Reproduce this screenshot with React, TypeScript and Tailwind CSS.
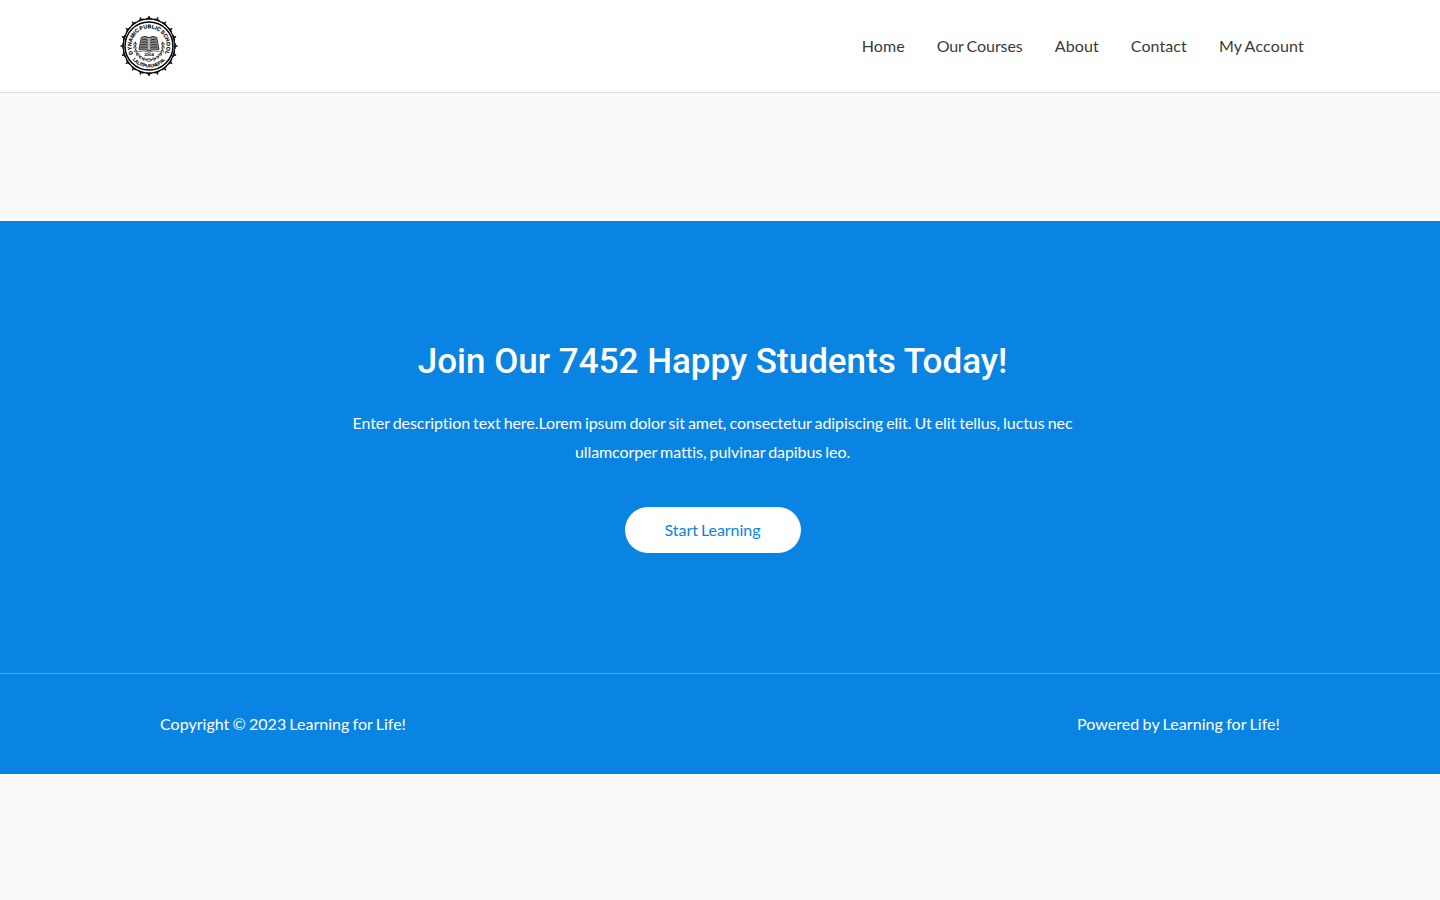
const petals = Array.from({ length: 20 }, (_, i) => i * 18);

function Logo() {
  return (
    <svg className="block h-[60px] w-[60px]" viewBox="-30 -30 60 60" role="img" aria-label="Dynamic Public School">
      <g transform="scale(0.95 1)">
        {petals.map((a) => (
          <path
            key={a}
            d="M-4.3 -26.6 Q-2.6 -28 -0.6 -27.9 L0 -30 L0.6 -27.9 Q2.6 -28 4.3 -26.6 Q0 -27 -4.3 -26.6Z"
            fill="#000"
            stroke="#000"
            strokeWidth="0.8"
            transform={`rotate(${a})`}
          />
        ))}
      </g>
      <circle r="24" fill="#fff" stroke="#000" strokeWidth="1.5" />
      <path id="upper-arc" d="M-15.3 8.8 A17.65 17.65 0 1 1 15.3 8.8" fill="none" />
      <path id="lower-arc" d="M-16.7 13.5 A21.5 21.5 0 0 0 16.7 13.5" fill="none" />
      <g fontFamily="Liberation Sans, sans-serif" fontWeight="700" fill="#000" textAnchor="middle">
        <text fontSize="5.3" stroke="#000" strokeWidth="0.15">
          <textPath href="#upper-arc" startOffset="50%" textLength="71" lengthAdjust="spacing">
            DYNAMIC PUBLIC SCHOOL
          </textPath>
        </text>
        <text fontSize="4.5" stroke="#000" strokeWidth="0.1">
          <textPath href="#lower-arc" startOffset="50%" textLength="37" lengthAdjust="spacing">
            LALITPUR, NEPAL
          </textPath>
        </text>
        <text y="10.4" fontSize="4.3">2004</text>
      </g>
      {[1, -1].map((s) => (
        <g key={s} transform={`scale(${s} 1)`}>
          <path d="M1.5 14 A14 14 0 0 0 13.4 -4" fill="none" stroke="#333" strokeWidth="0.7" />
          {[12, 28, 44, 60, 76, 92, 106].map((a) => (
            <path
              key={a}
              d="M0 14 Q-2 12.2 -3.2 12.8 M0 14 Q-1.8 15.8 -3 15.2"
              fill="none"
              stroke="#222"
              strokeWidth="0.8"
              transform={`rotate(${-a})`}
            />
          ))}
        </g>
      ))}
      <path
        d="M-10 3.5 L-7.7 -8.6 Q-4 -10.7 0 -8.4 Q4 -10.7 7.7 -8.6 L10 3.5 Q4.5 1.9 0 5.1 Q-4.5 1.9 -10 3.5Z"
        fill="#8c8c8c"
        stroke="#222"
        strokeWidth="0.9"
      />
      <path
        d="M-6.8 -6.2Q-4 -7.5 -1.4 -5.6 M-7.3 -3.6Q-4 -5 -1.4 -3.1 M-7.8 -1.1Q-4 -2.5 -1.4 -.6 M-8.3 1.3Q-4 0 -1.4 2 M6.8 -6.2Q4 -7.5 1.4 -5.6 M7.3 -3.6Q4 -5 1.4 -3.1 M7.8 -1.1Q4 -2.5 1.4 -.6 M8.3 1.3Q4 0 1.4 2"
        fill="none"
        stroke="#222"
        strokeWidth="0.9"
      />
      <path d="M0 -8V4" stroke="#ddd" strokeWidth="0.9" />
      <path d="M-10.6 5.5Q-4.5 3.6 0 6.4Q4.5 3.6 10.6 5.5" fill="none" stroke="#222" strokeWidth="0.7" />
    </svg>
  );
}

const links = [
  { label: "Home", spacing: "tracking-[0.04px]" },
  { label: "Our Courses", spacing: "tracking-[-0.07px]" },
  { label: "About", spacing: "tracking-[0.13px]" },
  { label: "Contact", spacing: "tracking-[0.08px]" },
  { label: "My Account", spacing: "tracking-[0.18px]" },
];

export default function App() {
  return (
    <div className="min-h-screen bg-[#fafafa] font-['Lato',sans-serif] text-base [font-variant-ligatures:none] [word-spacing:-0.95px]">
      <header className="border-b border-[#dddddd] bg-white">
        <div className="mx-auto flex h-[92px] max-w-[1202px] items-center justify-between pr-[1px]">
          <a href="#" className="block">
            <Logo />
          </a>
          <nav className="flex">
            {links.map(({ label, spacing }) => (
              <a key={label} href="#" className={`px-4 text-[#3a3a3a] ${spacing}`}>
                {label}
              </a>
            ))}
          </nav>
        </div>
      </header>
      <main className="pt-32">
        <section className="flex h-[452px] flex-col items-center bg-[#0984e3] pt-[118px] pr-[15px] text-center text-white">
          <h1 className="font-['Roboto',sans-serif] text-[35px] leading-[45px] font-medium [word-spacing:0]">
            Join Our 7452 Happy Students Today!
          </h1>
          <p className="mt-[25px] w-[750px] leading-[28.8px] tracking-[-0.07px]">
            Enter description text here.Lorem ipsum dolor sit amet, consectetur adipiscing elit. Ut elit tellus, luctus nec
            ullamcorper mattis, pulvinar dapibus leo.
          </p>
          <a
            href="#"
            className="mt-[40px] flex h-[46px] w-[176px] items-center justify-center rounded-full bg-white tracking-[-0.05px] text-[#0984e3]"
          >
            Start Learning
          </a>
        </section>
      </main>
      <footer className="border-t border-[#54a9eb] bg-[#0984e3] text-white">
        <div className="mx-auto flex h-[100px] max-w-[1120px] items-center justify-between">
          <p className="tracking-[0.02px]">Copyright © 2023 Learning for Life!</p>
          <p className="tracking-[0.07px]">Powered by Learning for Life!</p>
        </div>
      </footer>
    </div>
  );
}
